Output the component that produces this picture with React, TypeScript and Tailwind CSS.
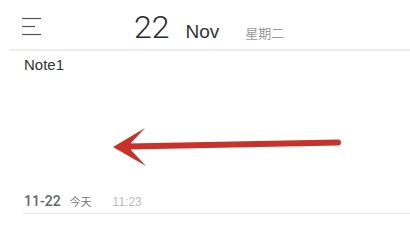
import React from "react";

export default function App() {
  return (
    <div className="w-[410px] h-[246px] bg-white overflow-hidden font-['Liberation_Sans','Noto_Sans_CJK_SC',sans-serif]">
      <div className="flex items-start h-[49px]">
        <svg className="ml-[22px] mt-[17px]" width="20" height="20" viewBox="0 0 20 20">
          <line x1="0" y1="1.5" x2="19" y2="1.5" stroke="#555" strokeWidth="1.2" />
          <line x1="0" y1="9.5" x2="13" y2="9.5" stroke="#555" strokeWidth="1.2" />
          <line x1="0" y1="17.5" x2="19" y2="17.5" stroke="#555" strokeWidth="1.2" />
        </svg>
        <div className="flex items-baseline ml-[92px] mt-[11px]">
          <span className="text-[32px] leading-[32px] font-light text-[#2b2b2b] font-['Roboto',sans-serif]">22</span>
          <span className="ml-[16px] text-[19px] leading-[20px] text-[#333]">Nov</span>
          <span className="ml-[26px] text-[13px] leading-[16px] text-[#999] font-['Noto_Sans_CJK_SC',sans-serif]">星期二</span>
        </div>
      </div>
      <div className="ml-[10px] h-[2px] bg-[#ededed]" />
      <div className="mt-[4px] pl-[24px] text-[15px] leading-[20px] text-[#333]">Note1</div>
      <svg className="block" width="410" height="116" viewBox="0 76 410 116">
        <line x1="128" y1="147.5" x2="338" y2="143.5" stroke="#c9322b" strokeWidth="6" strokeLinecap="round" />
        <polygon points="113,148 145,129 131,144 131,151 146,167" fill="#c9322b" />
      </svg>
      <div className="flex items-baseline pl-[24px] h-[20px]">
        <span className="text-[14px] leading-[20px] font-medium text-[#666] font-['Roboto',sans-serif]">11-22</span>
        <span className="ml-[9px] text-[11px] leading-[14px] text-[#777] font-['Noto_Sans_CJK_SC',sans-serif]">今天</span>
        <span className="ml-[21px] text-[12px] leading-[14px] text-[#bbb]">11:23</span>
      </div>
      <div className="mt-[2px] ml-[23px] h-[1px] bg-[#e6e6e6]" />
    </div>
  );
}
